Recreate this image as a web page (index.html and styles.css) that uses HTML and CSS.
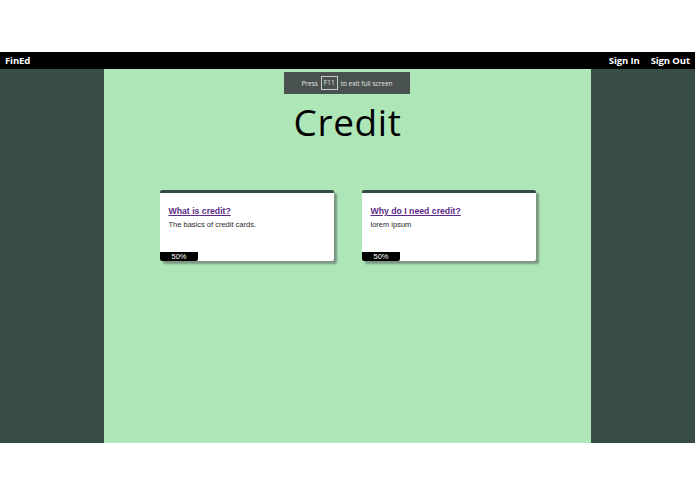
FILE: index.html
```html
<!DOCTYPE html>
<html>
<head>
<meta charset="utf-8">
<link rel="stylesheet" href="styles.css">
</head>
<body>
<div class="top-gap"></div>
<nav class="navbar">
  <a class="brand" href="#">FinEd</a>
  <div class="nav-links">
    <a href="#">Sign In</a>
    <a href="#">Sign Out</a>
  </div>
</nav>
<div class="page">
  <aside class="side"></aside>
  <main class="content">
    <div class="fs-notice">Press <span class="key">F11</span> to exit full screen</div>
    <h1 class="title">Credit</h1>
    <div class="cards">
      <div class="card">
        <a class="card-title" href="#">What is credit?</a>
        <p class="card-desc">The basics of credit cards.</p>
        <div class="progress">50%</div>
      </div>
      <div class="card">
        <a class="card-title" href="#">Why do I need credit?</a>
        <p class="card-desc">lorem ipsum</p>
        <div class="progress">50%</div>
      </div>
    </div>
  </main>
  <aside class="side"></aside>
</div>
</body>
</html>
```
FILE: styles.css
```css
html, body {
  margin: 0;
  padding: 0;
  background: #ffffff;
  font-family: "Liberation Sans", Arial, sans-serif;
}
.top-gap {
  height: 52px;
}
.navbar {
  height: 17px;
  background: #000000;
  display: flex;
  align-items: center;
  justify-content: space-between;
  padding: 0 5px;
}
.navbar a {
  color: #ffffff;
  text-decoration: none;
  font-family: "Open Sans", sans-serif;
  font-weight: 700;
  font-size: 9.5px;
  letter-spacing: -0.1px;
}
.nav-links {
  display: flex;
  gap: 11px;
}
.page {
  display: flex;
  height: 374px;
}
.side {
  background: #374c47;
  flex: 0 0 104px;
}
.page .side:last-child {
  flex: 1 1 auto;
}
.content {
  flex: 0 0 487px;
  background: #aee6b8;
  position: relative;
  display: flex;
  flex-direction: column;
  align-items: center;
}
.fs-notice {
  position: absolute;
  top: 3px;
  left: 180px;
  width: 126px;
  height: 22px;
  background: #49524e;
  color: #e6e6e6;
  font-family: "Open Sans", sans-serif;
  font-size: 6.5px;
  display: flex;
  align-items: center;
  justify-content: center;
  gap: 3px;
}
.key {
  border: 1px solid #c8c8c8;
  padding: 3px 2px;
  line-height: 1;
}
.title {
  margin: 33px 0 0 0;
  font-family: "Open Sans", sans-serif;
  font-weight: 400;
  font-size: 37px;
  line-height: 40px;
  color: #000000;
  letter-spacing: 0.6px;
}
.cards {
  display: flex;
  gap: 28px;
  margin-top: 48px;
}
.card {
  width: 174px;
  height: 68px;
  background: #ffffff;
  border-top: 3px solid #344a45;
  border-radius: 2px;
  box-shadow: 3px 3px 2px #7a9883;
  position: relative;
  padding: 0;
  box-sizing: content-box;
}
.card-title {
  display: block;
  margin: 13px 0 0 9px;
  color: #5b2a86;
  font-weight: 700;
  font-size: 8.7px;
  text-decoration: underline;
}
.card-desc {
  margin: 4px 0 0 9px;
  font-size: 7.5px;
  color: #2a2a2a;
}
.progress {
  position: absolute;
  left: 0;
  bottom: 0;
  width: 38px;
  height: 9px;
  background: #000000;
  color: #ffffff;
  font-size: 7.5px;
  line-height: 9px;
  padding-left: 12px;
  box-sizing: border-box;
  border-radius: 0 0 2px 2px;
}
```
